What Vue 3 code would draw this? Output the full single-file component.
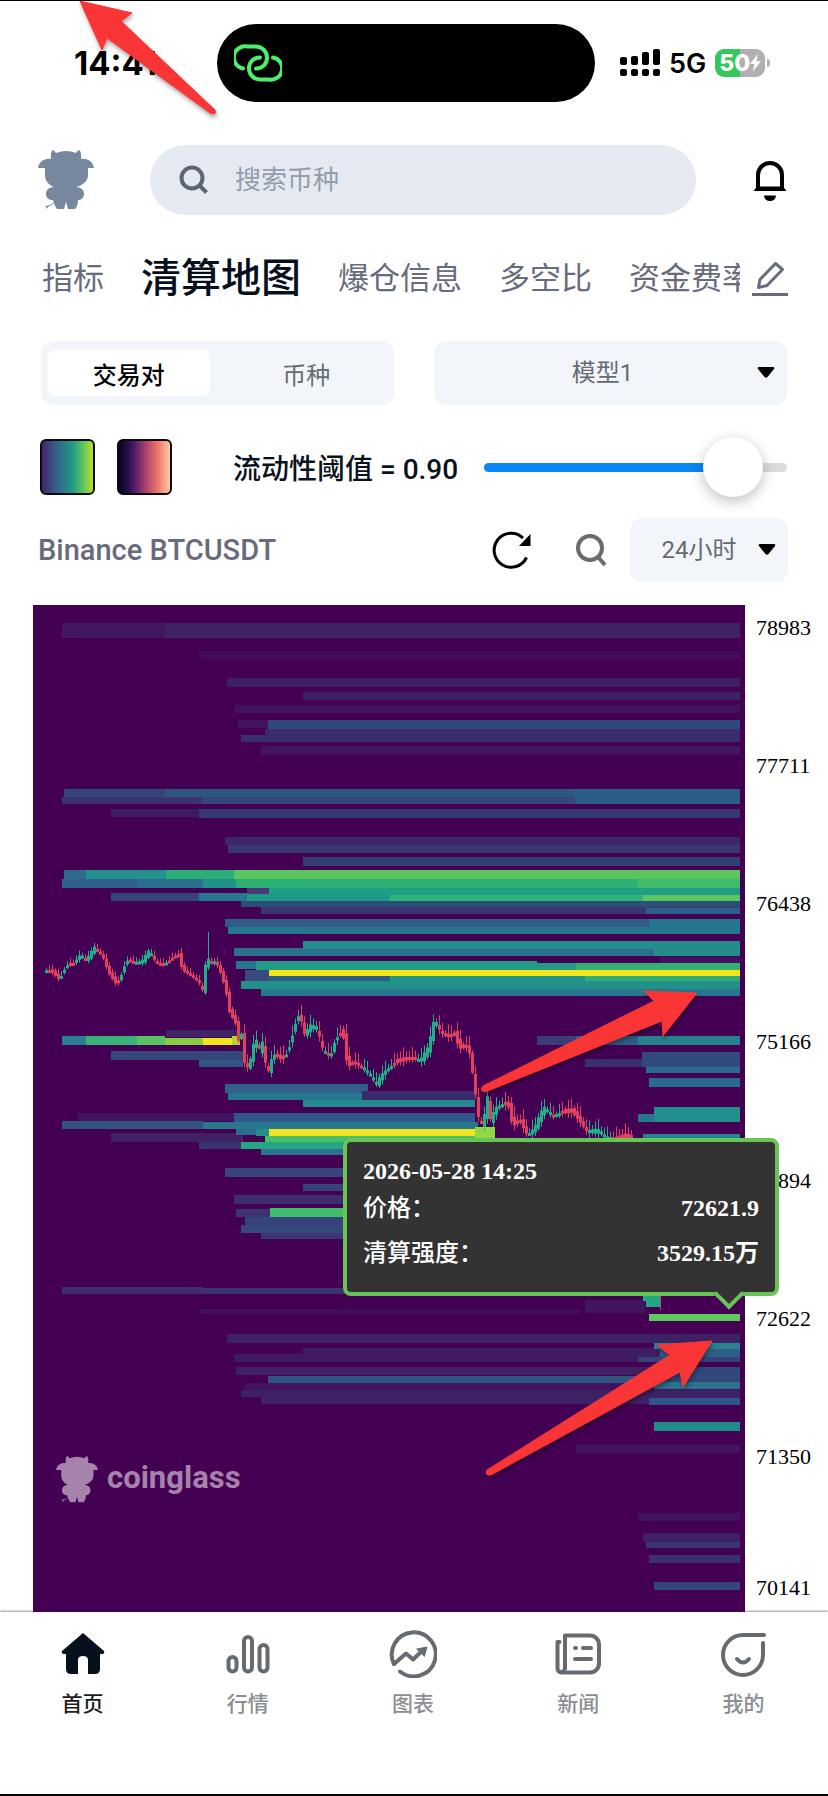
<template>
  <div class="page">
    <header class="status-bar">
      <span class="clock">14:41</span>
      <div class="island">
        <svg class="link-icon" viewBox="0 0 48 38" fill="none" stroke="#4cf06f" stroke-width="4" stroke-linecap="round">
          <path d="M9 24.500A11 11 0 0 1 13 2.500h9a11 11 0 0 1 11 11c0 6-4 11-11 11" />
          <path d="M39 13.500A11 11 0 0 1 35 35.500h-9a11 11 0 0 1-11-11c0-6 4-11 11-11" />
        </svg>
      </div>
      <div class="status-right">
        <svg class="signal" viewBox="0 0 40 28">
          <rect x="0" y="8" width="7" height="8" rx="2" />
          <rect x="11" y="7" width="7" height="9" rx="2" />
          <rect x="22" y="3" width="7" height="13" rx="2" />
          <rect x="33" y="0" width="7" height="16" rx="2" />
          <rect v-for="x in [0, 11, 22, 33]" :key="x" :x="x" y="20" width="7" height="7" rx="2" />
        </svg>
        <span class="network">5G</span>
        <span class="battery">
          <span>50</span>
          <svg viewBox="0 0 10 16"><path d="M7 0L0 9h4L2.500 16L10 6.500H6z" fill="#fff" /></svg>
        </span>
      </div>
    </header>

    <div class="search-row">
      <svg class="bull" viewBox="0 0 56 60"><use href="#bull-shape" /></svg>
      <label class="search-box">
        <svg viewBox="0 0 30 30" fill="none" stroke="#5b6670" stroke-width="4">
          <circle cx="13" cy="13" r="10.500" />
          <path d="M20.500 20.500L27.500 27.500" />
        </svg>
        <input type="search" placeholder="搜索币种" aria-label="搜索币种">
      </label>
      <button class="icon-button bell" aria-label="通知">
        <svg viewBox="0 0 34 42">
          <path d="M5 30V16a12 12 0 0 1 24 0v14" fill="none" stroke="#000" stroke-width="4" />
          <path d="M0.500 32L4 27.500h26L33.500 32z" />
          <path d="M11 36.500h12a6 5.500 0 0 1-12 0z" />
        </svg>
      </button>
    </div>

    <div class="tabs-row">
      <nav class="tabs">
        <a
            v-for="tab in tabs"
            :key="tab"
            href="#"
            :class="{ active: tab === activeTab }"
            @click.prevent="activeTab = tab"
        >{{ tab }}</a>
      </nav>
      <button class="icon-button edit" aria-label="编辑">
        <svg viewBox="0 0 36 36" fill="none" stroke="#686b7c" stroke-width="3">
          <path d="M6.500 26.500L8 18.500L23.500 2.500L30.500 8.500L15 24.500z" stroke-linejoin="round" />
          <path d="M0 33.500h36" />
        </svg>
      </button>
    </div>

    <div class="filters">
      <div class="segmented">
        <button
            v-for="mode in modes"
            :key="mode"
            :class="{ active: mode === activeMode }"
            @click="activeMode = mode"
        >{{ mode }}</button>
      </div>
      <div class="dropdown">
        <select v-model="model" aria-label="模型">
          <option>模型1</option>
          <option>模型2</option>
          <option>模型3</option>
        </select>
        <svg viewBox="0 0 18 11"><path d="M2 0h14q2 0 1 2L10.500 10q-1.500 1.500-3 0L1 2Q0 0 2 0z" /></svg>
      </div>
    </div>

    <div class="threshold-row">
      <button class="swatch viridis" aria-label="viridis"></button>
      <button class="swatch magma" aria-label="magma"></button>
      <label for="threshold">流动性阈值 = {{ Number(threshold).toFixed(2) }}</label>
      <input
          id="threshold"
          v-model="threshold"
          type="range"
          min="0"
          max="1"
          step="0.01"
          :style="{ '--fill': threshold * 100 - 5 + '%' }"
      >
    </div>

    <div class="pair-row">
      <h1>Binance BTCUSDT</h1>
      <button class="icon-button refresh" aria-label="刷新">
        <svg viewBox="0 0 40 38">
          <path d="M34.500 26.500A17 17 0 1 1 31 7" fill="none" stroke="#000" stroke-width="3" />
          <path d="M38.500 3v12H27z" />
        </svg>
      </button>
      <button class="icon-button zoom" aria-label="放大">
        <svg viewBox="0 0 32 32" fill="none" stroke="#6a6d6f" stroke-width="4">
          <circle cx="15" cy="14" r="12" />
          <path d="M23 23L30 31" />
        </svg>
      </button>
      <div class="dropdown range">
        <select v-model="range" aria-label="时间范围">
          <option>12小时</option>
          <option>24小时</option>
          <option>48小时</option>
        </select>
        <svg viewBox="0 0 18 11"><path d="M2 0h14q2 0 1 2L10.500 10q-1.500 1.500-3 0L1 2Q0 0 2 0z" /></svg>
      </div>
    </div>

    <section class="chart">
      <svg class="heatmap" viewBox="33 604 712 1007">
        <defs>
          <g id="bull-shape">
            <path d="M13 9C12.500 5 13 1 15 0q2 1 3 3Q28-1 38 3q1-2 3-3c2 1 2.500 5 2 9c7-1 12 3 13 9h-6v7c0 6-5 10-12 12c5 0 8 3 8 7c0 4-3 6-6 6q0 6-3 9h-7l-2-7l-2 7h-7q-3-4-4-9c-4 0-7-2-7-6c0-4 3-7 8-7C11 35 7 31 7 25v-7H0C1 12 6 8 13 9z" />
            <path d="M17 52c-2 1-3 3-6 4" fill="none" stroke="currentColor" stroke-width="1" />
            <path d="M12 55l-4 4v-3z" />
          </g>
        </defs>
        <rect x="33" y="604" width="712" height="1007" fill="#440154" />
        <rect
            v-for="(b, i) in bands"
            :key="'b' + i"
            :x="b[0]"
            :y="b[1]"
            :width="b[2] - b[0]"
            :height="b[3] - b[1]"
            :fill="b[4]"
        />
        <g v-for="(c, i) in candles" :key="'c' + i" :fill="c.up ? '#1fb28a' : '#e0415c'">
          <rect :x="c.x + 1" :y="c.high" width="1" :height="c.low - c.high" />
          <rect :x="c.x" :y="c.top" width="3" :height="c.height" />
        </g>
        <g class="watermark">
          <svg x="56" y="1455" width="42" height="47" viewBox="0 0 56 60" preserveAspectRatio="none"><use href="#bull-shape" /></svg>
          <text x="107" y="1487">coinglass</text>
        </g>
        <g class="arrow">
          <path d="M697 992L644 990L654 1000L483 1085Q479 1090 485 1091L662 1020L663 1035z" />
          <path d="M712 1340L657 1344L670 1354L487 1469Q484 1475 491 1474L680 1371L683 1386z" />
        </g>
      </svg>
      <ol class="axis">
        <li
            v-for="(price, i) in prices"
            :key="price"
            :style="{ flexGrow: i < prices.length - 1 ? price - prices[i + 1] : 0 }"
        >{{ price }}</li>
      </ol>
      <div class="tooltip">
        <time>2026-05-28 14:25</time>
        <dl>
          <dt>价格：</dt>
          <dd>72621.9</dd>
          <dt>清算强度：</dt>
          <dd>3529.15万</dd>
        </dl>
      </div>
    </section>

    <nav class="bottom-nav">
      <a href="#" class="active">
        <svg viewBox="0 0 48 48" fill="#06101c">
          <path d="M24 3L45 21q1 3-2 3h-2v15q0 5-5 5h-7V30q0-4-5-4t-5 4v14h-7q-5 0-5-5V24H5q-3 0-2-3z" />
        </svg>
        首页
      </a>
      <a href="#">
        <svg viewBox="0 0 48 48">
          <rect x="4.500" y="27" width="8" height="14.500" rx="4" />
          <rect x="20" y="7" width="8" height="34.500" rx="4" />
          <rect x="35.500" y="15" width="8" height="26.500" rx="4" />
        </svg>
        行情
      </a>
      <a href="#">
        <svg viewBox="0 0 48 48">
          <path d="M5 34A22 22 0 1 1 11 41.500" />
          <path d="M5 34L17 23.500L24 29.500L34 20" />
          <path d="M28 19l10-2l-2.500 9z" fill="#666b70" stroke-width="1" />
        </svg>
        图表
      </a>
      <a href="#">
        <svg viewBox="0 0 48 48">
          <path d="M11 38V5.500h25a9 9 0 0 1 9 9v19a9 9 0 0 1-9 9H7.500a4 4 0 0 1-4-4V12h2" />
          <path d="M11 38a4 4 0 0 1-4 4" />
          <path d="M21 18h1M29 18h8M21 29h16" />
        </svg>
        新闻
      </a>
      <a href="#">
        <svg viewBox="0 0 48 48">
          <path d="M45 5H24A20 20 0 1 0 44 25V13" />
          <path d="M18 29q6 7 12 0" />
        </svg>
        我的
      </a>
    </nav>

    <svg class="pointer-arrow arrow" viewBox="0 0 160 130">
      <path d="M10 1L62 13L51 21L145 110Q147 116 140 113L37 38L32 50z" />
    </svg>
  </div>
</template>

<script setup>
import { ref } from 'vue'

const tabs = ['指标', '清算地图', '爆仓信息', '多空比', '资金费率']
const activeTab = ref('清算地图')

const modes = ['交易对', '币种']
const activeMode = ref('交易对')

const model = ref('模型1')
const range = ref('24小时')
const threshold = ref(0.9)

const prices = [78983, 77711, 76438, 75166, 73894, 72622, 71350, 70141]

// liquidation bands: x1, y1, x2, y2, color
const bands = [
  [62, 622, 165, 637, '#42175f'],
  [165, 622, 740, 637, '#3f2465'],
  [198, 650, 740, 658, '#430c58'],
  [227, 677, 740, 686, '#3d1f63'],
  [303, 691, 740, 699, '#3c2164'],
  [235, 704, 740, 712, '#42125c'],
  [238, 719, 268, 727, '#42155f'],
  [241, 734, 268, 741, '#3a3070'],
  [265, 728, 740, 741, '#3b2d6d'],
  [268, 719, 740, 728, '#2f497c'],
  [261, 745, 740, 754, '#42155f'],
  [64, 788, 165, 796, '#35457a'],
  [165, 788, 740, 796, '#2f567f'],
  [62, 796, 202, 803, '#3d3170'],
  [202, 796, 575, 803, '#36477b'],
  [575, 788, 740, 803, '#2a5e86'],
  [111, 808, 199, 816, '#3c1c61'],
  [199, 808, 740, 817, '#353b72'],
  [225, 836, 740, 844, '#3b2869'],
  [228, 844, 740, 852, '#38376f'],
  [303, 856, 740, 865, '#353f74'],
  [64, 869, 86, 878, '#2e6a8c'],
  [86, 869, 166, 878, '#23908b'],
  [166, 869, 234, 878, '#2aae76'],
  [234, 869, 740, 878, '#5bc55f'],
  [62, 878, 137, 887, '#31608a'],
  [137, 878, 203, 887, '#2b6f8e'],
  [203, 878, 236, 887, '#21918c'],
  [236, 878, 740, 887, '#2cb073'],
  [638, 878, 740, 887, '#3fbb6c'],
  [247, 887, 269, 893, '#443a7a'],
  [269, 887, 740, 894, '#229e86'],
  [111, 892, 199, 900, '#354577'],
  [199, 892, 247, 900, '#25788e'],
  [247, 893, 390, 900, '#209a88'],
  [390, 894, 740, 900, '#2fb376'],
  [643, 894, 740, 900, '#5bc55f'],
  [241, 900, 740, 906, '#2c4f7a'],
  [261, 906, 740, 913, '#39376f'],
  [646, 907, 740, 913, '#2c608a'],
  [225, 918, 740, 926, '#2f5b84'],
  [228, 926, 740, 933, '#26778d'],
  [649, 918, 740, 933, '#26778d'],
  [234, 947, 740, 955, '#2b718e'],
  [303, 940, 740, 948, '#238d8b'],
  [654, 940, 740, 955, '#238d8b'],
  [660, 956, 740, 962, '#421260'],
  [236, 960, 256, 968, '#26788e'],
  [256, 960, 537, 969, '#219a86'],
  [537, 962, 576, 969, '#219a86'],
  [576, 962, 740, 969, '#35b073'],
  [245, 969, 269, 980, '#3a4a7c'],
  [269, 969, 740, 975, '#f2e51c'],
  [269, 975, 390, 981, '#2c5c87'],
  [390, 975, 740, 981, '#239488'],
  [585, 975, 740, 981, '#31ad77'],
  [241, 980, 740, 988, '#239089'],
  [261, 988, 740, 995, '#27788e'],
  [166, 1029, 237, 1036, '#3f2466'],
  [62, 1035, 86, 1044, '#2a8090'],
  [86, 1035, 137, 1044, '#38b276'],
  [137, 1035, 165, 1044, '#58c461'],
  [165, 1037, 203, 1044, '#88ce44'],
  [203, 1037, 232, 1044, '#f0e51c'],
  [232, 1035, 240, 1044, '#b0d52f'],
  [111, 1050, 243, 1059, '#354678'],
  [199, 1059, 243, 1066, '#2f5583'],
  [537, 1035, 740, 1044, '#3b3e75'],
  [576, 1035, 638, 1044, '#2d5f88'],
  [638, 1035, 740, 1044, '#26838e'],
  [585, 1058, 740, 1066, '#3b2f6d'],
  [642, 1051, 740, 1066, '#324a7c'],
  [646, 1066, 740, 1072, '#2a6b8d'],
  [649, 1077, 740, 1086, '#2a6b8d'],
  [225, 1083, 368, 1092, '#32608a'],
  [362, 1090, 475, 1099, '#3b2b6c'],
  [228, 1092, 362, 1099, '#26778d'],
  [303, 1099, 475, 1106, '#238b8b'],
  [638, 1113, 740, 1121, '#26778e'],
  [654, 1106, 740, 1121, '#238f8b'],
  [643, 1133, 740, 1140, '#25858e'],
  [78, 1112, 234, 1120, '#421461'],
  [234, 1112, 475, 1121, '#31588a'],
  [62, 1120, 203, 1128, '#34537f'],
  [203, 1121, 478, 1128, '#297890'],
  [111, 1132, 243, 1141, '#402264'],
  [199, 1141, 243, 1148, '#3b3370'],
  [236, 1128, 256, 1134, '#2d6c8c'],
  [256, 1128, 269, 1135, '#229089'],
  [269, 1128, 475, 1135, '#f0e51c'],
  [475, 1126, 495, 1137, '#8fd744'],
  [265, 1135, 475, 1141, '#45bf6a'],
  [241, 1141, 345, 1148, '#25a584'],
  [261, 1148, 345, 1154, '#2b728e'],
  [225, 1167, 345, 1176, '#36467a'],
  [303, 1183, 345, 1190, '#364377'],
  [234, 1194, 345, 1203, '#3d2d6c'],
  [236, 1208, 270, 1216, '#3b3471'],
  [270, 1207, 345, 1216, '#40bd6c'],
  [245, 1216, 345, 1224, '#38427a'],
  [241, 1224, 345, 1232, '#36477b'],
  [261, 1232, 345, 1238, '#3b3772'],
  [62, 1286, 203, 1293, '#3f2d70'],
  [203, 1287, 345, 1293, '#3a336f'],
  [199, 1308, 580, 1313, '#42105b'],
  [585, 1299, 645, 1312, '#42155f'],
  [643, 1295, 660, 1300, '#22a685'],
  [646, 1300, 660, 1306, '#22a685'],
  [660, 1295, 661, 1309, '#d9405a'],
  [649, 1313, 740, 1320, '#5fc85e'],
  [227, 1333, 740, 1342, '#3e2165'],
  [234, 1353, 740, 1361, '#3f1a60'],
  [303, 1347, 740, 1355, '#3e1d62'],
  [654, 1342, 740, 1348, '#26838e'],
  [660, 1348, 740, 1356, '#2f5f87'],
  [638, 1356, 740, 1361, '#38427a'],
  [236, 1366, 740, 1374, '#3f2063'],
  [268, 1375, 740, 1382, '#2f5580'],
  [652, 1366, 740, 1381, '#32487b'],
  [245, 1382, 740, 1389, '#421460'],
  [654, 1381, 740, 1388, '#2a728e'],
  [241, 1389, 740, 1396, '#3c2265'],
  [261, 1396, 740, 1403, '#3d2265'],
  [649, 1397, 740, 1404, '#31548a'],
  [654, 1421, 740, 1430, '#238b8b'],
  [576, 1444, 740, 1452, '#411560'],
  [638, 1512, 740, 1520, '#42135e'],
  [643, 1532, 740, 1541, '#3e2064'],
  [646, 1541, 740, 1547, '#38356f'],
  [649, 1554, 740, 1562, '#38306f'],
  [654, 1581, 740, 1589, '#34457a']
]

// turning points of the price line, filled up with candles in between
const turns = [
  [45, 970], [52, 968], [61, 976], [68, 962], [75, 962], [82, 955], [88, 961], [96, 948],
  [104, 955], [110, 970], [119, 982], [128, 958], [136, 962], [143, 963], [151, 951],
  [157, 962], [165, 962], [173, 955], [180, 952], [184, 968], [193, 975], [199, 980],
  [204, 992], [208, 958], [213, 963], [217, 960], [222, 970], [227, 985], [231, 1008],
  [237, 1020], [240, 1038], [243, 1032], [246, 1062], [250, 1070], [257, 1038], [260, 1055],
  [264, 1045], [268, 1072], [271, 1072], [274, 1052], [284, 1055], [290, 1045], [297, 1020],
  [301, 1012], [306, 1035], [312, 1028], [318, 1030], [324, 1050], [332, 1055], [337, 1035],
  [344, 1025], [349, 1062], [355, 1060], [366, 1070], [378, 1085], [385, 1072], [396, 1058],
  [403, 1056], [414, 1056], [422, 1062], [430, 1050], [436, 1020], [442, 1032], [450, 1033],
  [456, 1030], [461, 1043], [470, 1045], [475, 1080], [481, 1128], [485, 1124], [489, 1100],
  [491, 1125], [497, 1108], [505, 1100], [510, 1102], [514, 1120], [522, 1118], [529, 1135],
  [536, 1130], [545, 1110], [555, 1115], [563, 1108], [574, 1107], [581, 1118], [588, 1132],
  [600, 1133], [608, 1138], [625, 1132], [636, 1136]
]

function priceAt(x) {
  const i = Math.max(1, turns.findIndex(t => t[0] >= x))
  const [x1, y1] = turns[i - 1]
  const [x2, y2] = turns[i]
  return y1 + (y2 - y1) * (x - x1) / (x2 - x1)
}

const candles = []
for (let x = 45, n = 0; x < 633; x += 3, n++) {
  const wobble = Math.sin(n * 12.9) * (x > 240 ? 5 : 3)
  const open = priceAt(x)
  const close = priceAt(x + 3) + wobble
  const wick = 2 + Math.abs(Math.sin(n * 7.3)) * (x > 240 ? 8 : 3)
  const top = Math.min(open, close)
  const bottom = Math.max(open, close)
  candles.push({
    x,
    up: close < open,
    top,
    height: Math.max(3, bottom - top),
    high: x === 207 ? 931 : top - wick,
    low: bottom + wick / 2
  })
}
</script>

<style>
body {
  margin: 0;
  background: #fff;
}
</style>

<style scoped>
.page {
  position: relative;
  box-sizing: border-box;
  min-height: 100vh;
  border-top: 1px solid #000;
  border-bottom: 2px solid #000;
  font-family: Roboto, "Noto Sans CJK SC", sans-serif;
  color: #000;
  overflow: hidden;
}

a {
  color: inherit;
  text-decoration: none;
}

button,
select,
input {
  font: inherit;
  color: inherit;
  border: 0;
  margin: 0;
  padding: 0;
  background: none;
}

svg {
  display: block;
}

.icon-button svg {
  width: 100%;
}

.status-bar {
  display: grid;
  grid-template-columns: 217px 378px 1fr;
  align-items: center;
  height: 78px;
  padding-top: 23px;
  font-family: Inter, "Liberation Sans", sans-serif;
}

.clock {
  padding-left: 74px;
  font-size: 33px;
  font-weight: 700;
}

.island {
  display: flex;
  align-items: center;
  height: 78px;
  border-radius: 39px;
  background: #000;
}

.link-icon {
  width: 48px;
  margin-left: 17px;
}

.status-right {
  display: flex;
  align-items: center;
  padding-left: 25px;
}

.signal {
  width: 40px;
}

.network {
  margin-left: 9px;
  font-size: 27px;
  font-weight: 600;
}

.battery {
  position: relative;
  display: flex;
  align-items: center;
  justify-content: center;
  width: 50px;
  height: 28px;
  margin-left: 9px;
  border-radius: 9px;
  background: linear-gradient(90deg, #34c759 50%, #b0b0b0 50%);
  color: #fff;
  font-size: 23px;
  font-weight: 800;
}

.battery svg {
  width: 11px;
}

.battery::after {
  content: '';
  position: absolute;
  right: -5px;
  top: 10px;
  width: 3px;
  height: 8px;
  border-radius: 0 4px 4px 0;
  background: #b0b0b0;
}

.search-row {
  display: flex;
  align-items: center;
  margin: 43px 41px 0 38px;
}

.bull {
  width: 56px;
  fill: #76879e;
  color: #76879e;
}

.search-box {
  display: flex;
  flex: 1;
  align-items: center;
  height: 70px;
  margin: 0 57px 0 56px;
  padding-left: 29px;
  border-radius: 35px;
  background: #e5eaf2;
}

.search-box svg {
  width: 30px;
  flex: none;
}

.search-box input {
  flex: 1;
  min-width: 0;
  margin-left: 26px;
  font-size: 26px;
  outline: none;
}

.search-box input::placeholder {
  color: #959cab;
  opacity: 1;
}

.bell {
  width: 34px;
}

.tabs-row {
  display: flex;
  align-items: center;
  height: 60px;
  margin: 34px 40px 0 42px;
}

.tabs {
  display: flex;
  flex: 1;
  align-items: center;
  gap: 37px;
  min-width: 0;
  overflow: hidden;
  white-space: nowrap;
  font-size: 31px;
  line-height: 60px;
  color: #686b7c;
}

.tabs .active {
  font-size: 40px;
  font-weight: 500;
  color: #06101c;
}

.edit {
  width: 36px;
  margin-left: 12px;
}

.filters {
  display: grid;
  grid-template-columns: 1fr 1fr;
  gap: 40px;
  margin: 32px 41px 0;
  font-size: 24px;
  color: #666b70;
}

.segmented {
  display: grid;
  grid-template-columns: 1fr 1fr;
  gap: 16px;
  box-sizing: border-box;
  height: 64px;
  padding: 9px 7px;
  border-radius: 12px;
  background: #f2f6fa;
}

.segmented button {
  border-radius: 8px;
}

.segmented .active {
  background: #fff;
  color: #000;
  font-weight: 500;
}

.dropdown {
  position: relative;
  height: 64px;
}

.dropdown select {
  width: 100%;
  height: 100%;
  padding: 0 32px 0 16px;
  border-radius: 12px;
  background: #f2f6fa;
  appearance: none;
  text-align: center;
  text-align-last: center;
}

.dropdown svg {
  position: absolute;
  right: 12px;
  top: 26px;
  width: 18px;
  pointer-events: none;
}

.threshold-row {
  display: flex;
  align-items: center;
  height: 62px;
  margin: 31px 41px 0 40px;
}

.swatch {
  width: 55px;
  height: 56px;
  margin-right: 22px;
  border: 2px solid #0a0a12;
  border-radius: 6px;
}

.viridis {
  background: linear-gradient(90deg, #46236c, #33608a 28%, #219a86 60%, #5ac260 80%, #bddf26);
}

.magma {
  background: linear-gradient(90deg, #06041a, #3b1463 25%, #a8406f 52%, #ec7467 75%, #fcc9a0);
}

.threshold-row label {
  margin-left: 39px;
  font-size: 28px;
  font-weight: 500;
  color: #0b111c;
  white-space: nowrap;
}

.threshold-row input {
  flex: 1;
  min-width: 0;
  height: 62px;
  margin-left: 26px;
  appearance: none;
}

.threshold-row input::-webkit-slider-runnable-track {
  height: 9px;
  border-radius: 5px;
  background: linear-gradient(90deg, #0a86f5 var(--fill), #dcdcdc var(--fill));
}

.threshold-row input::-webkit-slider-thumb {
  width: 60px;
  height: 60px;
  margin-top: -26px;
  border-radius: 50%;
  background: #fff;
  box-shadow: 0 4px 14px rgba(0, 0, 0, 0.25);
  appearance: none;
}

.pair-row {
  display: flex;
  align-items: center;
  margin: 20px 40px 0 38px;
}

.pair-row h1 {
  flex: 1;
  margin: 0;
  font-size: 29px;
  font-weight: 500;
  color: #686b7c;
}

.refresh {
  width: 40px;
}

.zoom {
  width: 32px;
  margin: 0 23px 0 43px;
}

.range {
  width: 158px;
  font-size: 24px;
  color: #666b70;
}

.range select {
  padding: 0 34px 0 14px;
}

.chart {
  position: relative;
  z-index: 1;
  display: flex;
  margin: 23px 0 0 33px;
}

.heatmap {
  flex: 1;
  min-width: 0;
}

.watermark {
  fill: #a583ab;
  color: #a583ab;
}

.watermark text {
  font-size: 31px;
  font-weight: 700;
}

.arrow path {
  fill: #fa3535;
  stroke: #fa3535;
  stroke-width: 1;
  stroke-linejoin: round;
}

.arrow {
  filter: drop-shadow(1px 3px 2px rgba(0, 0, 0, 0.35));
}

.axis {
  display: flex;
  flex-direction: column;
  width: 72px;
  margin: 0;
  padding: 11px 0 12px 11px;
  list-style: none;
  font-family: "Liberation Serif", serif;
  font-size: 22px;
  line-height: 24px;
}

.axis li {
  flex-basis: 0;
}

.axis li:last-child {
  flex-basis: 24px;
}

.tooltip {
  position: absolute;
  top: 533px;
  right: 49px;
  box-sizing: border-box;
  width: 436px;
  padding: 11px 16px 20px;
  border: 4px solid #68c455;
  border-radius: 8px;
  background: #333;
  color: #fff;
  font-family: "Liberation Serif", "Noto Sans CJK SC", serif;
  font-size: 24px;
  font-weight: 700;
}

.tooltip::after {
  content: '';
  position: absolute;
  right: 35px;
  bottom: -13px;
  box-sizing: border-box;
  width: 22px;
  height: 22px;
  border: solid #68c455;
  border-width: 0 4px 4px 0;
  background: #333;
  transform: rotate(45deg);
}

.tooltip time {
  display: block;
  line-height: 36px;
}

.tooltip dl {
  display: grid;
  grid-template-columns: auto auto;
  justify-content: space-between;
  row-gap: 7px;
  margin: 0;
  line-height: 38px;
}

.tooltip dt {
  font-weight: 500;
}

.tooltip dd {
  margin: 0;
  text-align: right;
}

.bottom-nav {
  display: grid;
  grid-template-columns: repeat(5, 1fr);
  padding: 18px 2px 70px 0;
  box-shadow: 0 -1px 2px rgba(0, 0, 0, 0.4);
}

.bottom-nav a {
  display: flex;
  flex-direction: column;
  align-items: center;
  gap: 11px;
  font-size: 21px;
  font-weight: 500;
  line-height: 30px;
  color: #8b8e92;
}

.bottom-nav .active {
  color: #1c1c1c;
}

.bottom-nav svg {
  width: 48px;
  height: 48px;
}

.bottom-nav a:not(.active) svg {
  fill: none;
  stroke: #666b70;
  stroke-width: 4;
  stroke-linecap: round;
  stroke-linejoin: round;
}

.pointer-arrow {
  position: absolute;
  left: 70px;
  top: -1px;
  width: 160px;
  z-index: 2;
}
</style>
